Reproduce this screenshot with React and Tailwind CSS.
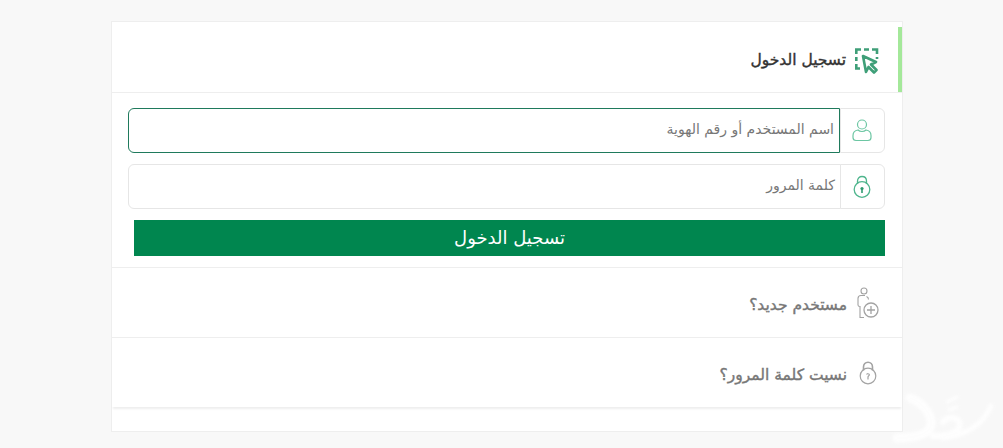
const PointerIcon = () => (
  <svg width="24" height="26" viewBox="0 0 24 26" fill="none" stroke="#3f9f78" strokeWidth="2.6">
    <path d="M1.3 6V1.5H6M9 1.5H14M17 1.5H22V6M22 9V11M1.3 9V13M1.3 16V20.5H5" />
    <path d="M8 8L21 14L16 16.5L21.5 22L19 24.5L13.5 19L11 24Z" strokeWidth="2.6" strokeLinejoin="round" />
  </svg>
);

const UserIcon = () => (
  <svg className="-mt-[2px]" width="20" height="24" viewBox="0 0 20 24" fill="none" stroke="#6cc6a3" strokeWidth="1.2">
    <circle cx="10" cy="6.5" r="4.5" />
    <path d="M6 12C3 12.5 1 14.5 1 17.5V19.5C1 21.5 2.5 22.5 4 22.5H16C17.5 22.5 19 21.5 19 19.5V17.5C19 14.5 17 12.5 14 12C12 14 8 14 6 12Z" />
  </svg>
);

const LockIcon = () => (
  <svg width="18" height="24" viewBox="0 0 18 24" fill="none" stroke="#4fb58d" strokeWidth="1.3">
    <path d="M4.5 9V6C4.5 3.2 6.5 1.5 9 1.5C11.5 1.5 13.5 3.2 13.5 6V9" />
    <circle cx="9" cy="14.5" r="7.8" />
    <circle cx="9" cy="13.5" r="1.6" fill="#2f9a70" stroke="none" />
    <path d="M9 14V18" strokeWidth="1.6" stroke="#2f9a70" />
  </svg>
);

const NewUserIcon = () => (
  <svg width="22" height="32" viewBox="0 0 22 32" fill="none" stroke="#a3a3a3" strokeWidth="1.1">
    <circle cx="7" cy="4" r="3" />
    <path d="M8 8.5H4C2 8.5 1 9.5 1 11.5V18C1 19 1.7 19.5 3 19.5V30.5H7" />
    <path d="M9.5 9.5C11 10 11.5 11 11.5 12.5" />
    <circle cx="14" cy="23" r="7" strokeWidth="1.3" />
    <path d="M14 19V27M10 23H18" strokeWidth="1.3" />
  </svg>
);

const ForgotIcon = () => (
  <svg width="18" height="24" viewBox="0 0 18 24" fill="none" stroke="#a3a3a3" strokeWidth="1.2">
    <path d="M4.5 9.5V6C4.5 3.2 6.4 1.2 9 1.2C11.6 1.2 13.5 3.2 13.5 6V9.5" strokeWidth="1.6" />
    <circle cx="9" cy="15" r="7.8" />
    <path d="M7.6 13.6C7.6 12.4 10.4 12.4 10.4 13.8C10.4 14.8 9 14.8 9 16V18.5" />
  </svg>
);

const Watermark = () => (
  <svg className="absolute right-[10px] bottom-0 blur-[1.5px]" width="108" height="58" viewBox="0 0 108 58" fill="none" stroke="#ffffff" strokeLinecap="round" opacity="0.85">
    <path d="M25 8C38 12 50 28 45 38C40 46 25 48 12 48" strokeWidth="9" />
    <path d="M58 32C64 24 78 28 74 38C70 44 58 46 48 46" strokeWidth="6" />
    <path d="M62 12L72 7M64 20L72 17" strokeWidth="3" />
    <path d="M106 16C100 30 88 44 58 48" strokeWidth="5" />
  </svg>
);

const InputRow = ({ icon, placeholder, focused }) => (
  <div className="flex h-[45px] bg-white">
    <div className="flex w-[45px] shrink-0 items-center justify-center rounded-r-[6px] border border-[#e6e6e6] bg-white pr-[2px]">
      {icon}
    </div>
    <div
      className={`flex flex-1 items-center rounded-l-[6px] border bg-white pr-[5px] pb-[2px] text-[14px] text-[#777777] ${
        focused ? "border-[#1f7a5c]" : "-mr-px border-[#e6e6e6]"
      }`}
    >
      <span>{placeholder}</span>
    </div>
  </div>
);

const LinkRow = ({ icon, label, last }) => (
  <div className={`flex h-[70px] items-center border-t border-[#eeeeee] pr-[22px] ${last ? "shadow-[0_3px_2px_-1px_rgba(0,0,0,0.07)]" : ""}`}>
    <div className="flex w-[24px] justify-center">{icon}</div>
    <span className="mr-[9px] pt-[7px] text-[15.5px] text-[#777777] [-webkit-text-stroke:0.4px_#777777]">{label}</span>
  </div>
);

export default function App() {
  return (
    <div
      dir="rtl"
      className="relative h-[448px] w-[1003px] overflow-hidden bg-[#f8f8f8]"
      style={{ fontFamily: '"DejaVu Sans", sans-serif' }}
    >
      <div className="mt-[21px] mr-[100px] h-[411px] w-[792px] border border-[#eeeeee] bg-white">
        <div className="flex h-[71px] items-end border-b border-[#eeeeee]">
          <div className="flex h-[65px] items-center border-r-[4px] border-[#a4e89a] pr-[19px]">
            <div className="pt-[3px]"><PointerIcon /></div>
          </div>
          <span className="mr-[9px] self-center pt-[8px] text-[15.5px] text-[#333333] [-webkit-text-stroke:0.4px_#333333]">تسجيل الدخول</span>
        </div>

        <div className="flex flex-col gap-[11px] pt-[15px] pr-[17px] pl-[16px]">
          <InputRow icon={<UserIcon />} placeholder="اسم المستخدم أو رقم الهوية" focused />
          <InputRow icon={<LockIcon />} placeholder="كلمة المرور" />
        </div>
        <div className="pt-[11px] pr-[17px] pb-[11px] pl-[22px]">
          <button className="flex h-[36px] w-full items-center justify-center bg-[#00864f] pb-[2px] text-[18px] text-white">
            تسجيل الدخول
          </button>
        </div>

        <LinkRow icon={<NewUserIcon />} label="مستخدم جديد؟" />
        <LinkRow icon={<ForgotIcon />} label="نسيت كلمة المرور؟" last />
      </div>
      <Watermark />
    </div>
  );
}
